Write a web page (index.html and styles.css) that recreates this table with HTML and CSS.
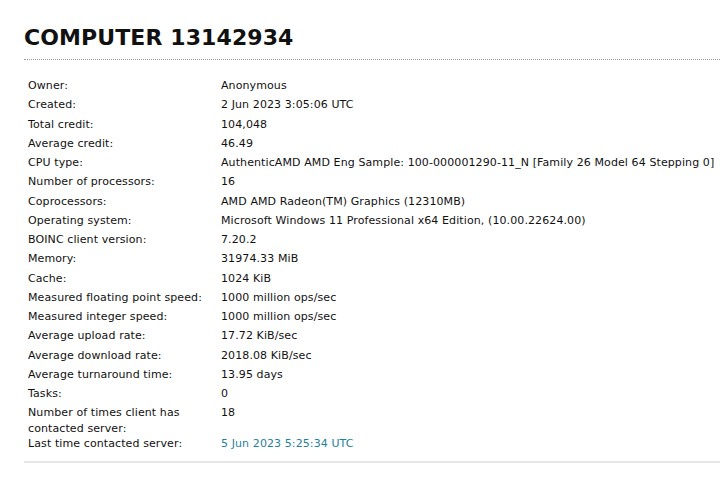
FILE: index.html
```html
<!DOCTYPE html>
<html>
<head>
<meta charset="utf-8">
<link rel="stylesheet" href="styles.css">
</head>
<body>
<div class="page">
  <h1 class="title">COMPUTER 13142934</h1>
  <div class="rule"></div>
  <div class="info">
    <div class="row"><div class="label">Owner:</div><div class="value">Anonymous</div></div>
    <div class="row"><div class="label">Created:</div><div class="value">2 Jun 2023 3:05:06 UTC</div></div>
    <div class="row"><div class="label">Total credit:</div><div class="value">104,048</div></div>
    <div class="row"><div class="label">Average credit:</div><div class="value">46.49</div></div>
    <div class="row"><div class="label">CPU type:</div><div class="value">AuthenticAMD AMD Eng Sample: 100-000001290-11_N [Family 26 Model 64 Stepping 0]</div></div>
    <div class="row"><div class="label">Number of processors:</div><div class="value">16</div></div>
    <div class="row"><div class="label">Coprocessors:</div><div class="value">AMD AMD Radeon(TM) Graphics (12310MB)</div></div>
    <div class="row"><div class="label">Operating system:</div><div class="value">Microsoft Windows 11 Professional x64 Edition, (10.00.22624.00)</div></div>
    <div class="row"><div class="label">BOINC client version:</div><div class="value">7.20.2</div></div>
    <div class="row"><div class="label">Memory:</div><div class="value">31974.33 MiB</div></div>
    <div class="row"><div class="label">Cache:</div><div class="value">1024 KiB</div></div>
    <div class="row"><div class="label">Measured floating point speed:</div><div class="value">1000 million ops/sec</div></div>
    <div class="row"><div class="label">Measured integer speed:</div><div class="value">1000 million ops/sec</div></div>
    <div class="row"><div class="label">Average upload rate:</div><div class="value">17.72 KiB/sec</div></div>
    <div class="row"><div class="label">Average download rate:</div><div class="value">2018.08 KiB/sec</div></div>
    <div class="row"><div class="label">Average turnaround time:</div><div class="value">13.95 days</div></div>
    <div class="row"><div class="label">Tasks:</div><div class="value">0</div></div>
    <div class="row wrap"><div class="label">Number of times client has contacted server:</div><div class="value">18</div></div>
    <div class="row"><div class="label">Last time contacted server:</div><div class="value"><a class="link" href="#">5 Jun 2023 5:25:34 UTC</a></div></div>
  </div>
  <div class="bottom-rule"></div>
</div>
</body>
</html>
```

FILE: styles.css
```css
html, body {
  margin: 0;
  padding: 0;
  background: #ffffff;
}
body {
  font-family: "DejaVu Sans", Verdana, sans-serif;
  color: #111111;
  overflow: hidden;
}
.page {
  padding: 25px 0 0 24px;
}
.title {
  margin: 0;
  font-size: 22px;
  font-weight: bold;
  line-height: 26px;
  color: #111;
  letter-spacing: 0.1px;
}
.rule {
  margin-top: 8px;
  border-top: 1px dotted #9a9a9a;
  width: 720px;
}
.info {
  margin-top: 16px;
  padding-left: 4px;
  font-size: 11px;
  letter-spacing: 0.1px;
}
.row {
  display: grid;
  grid-template-columns: 193px 1fr;
  padding: 2px 0;
  line-height: 15.25px;
}
.row.wrap {
  margin-bottom: -4px;
}
.label {
  width: 175px;
}
.value {
  white-space: nowrap;
}
.link {
  color: #267f9c;
  text-decoration: none;
}
.bottom-rule {
  margin-top: 8px;
  border-top: 2px solid #e6e6e6;
  width: 720px;
}
```
